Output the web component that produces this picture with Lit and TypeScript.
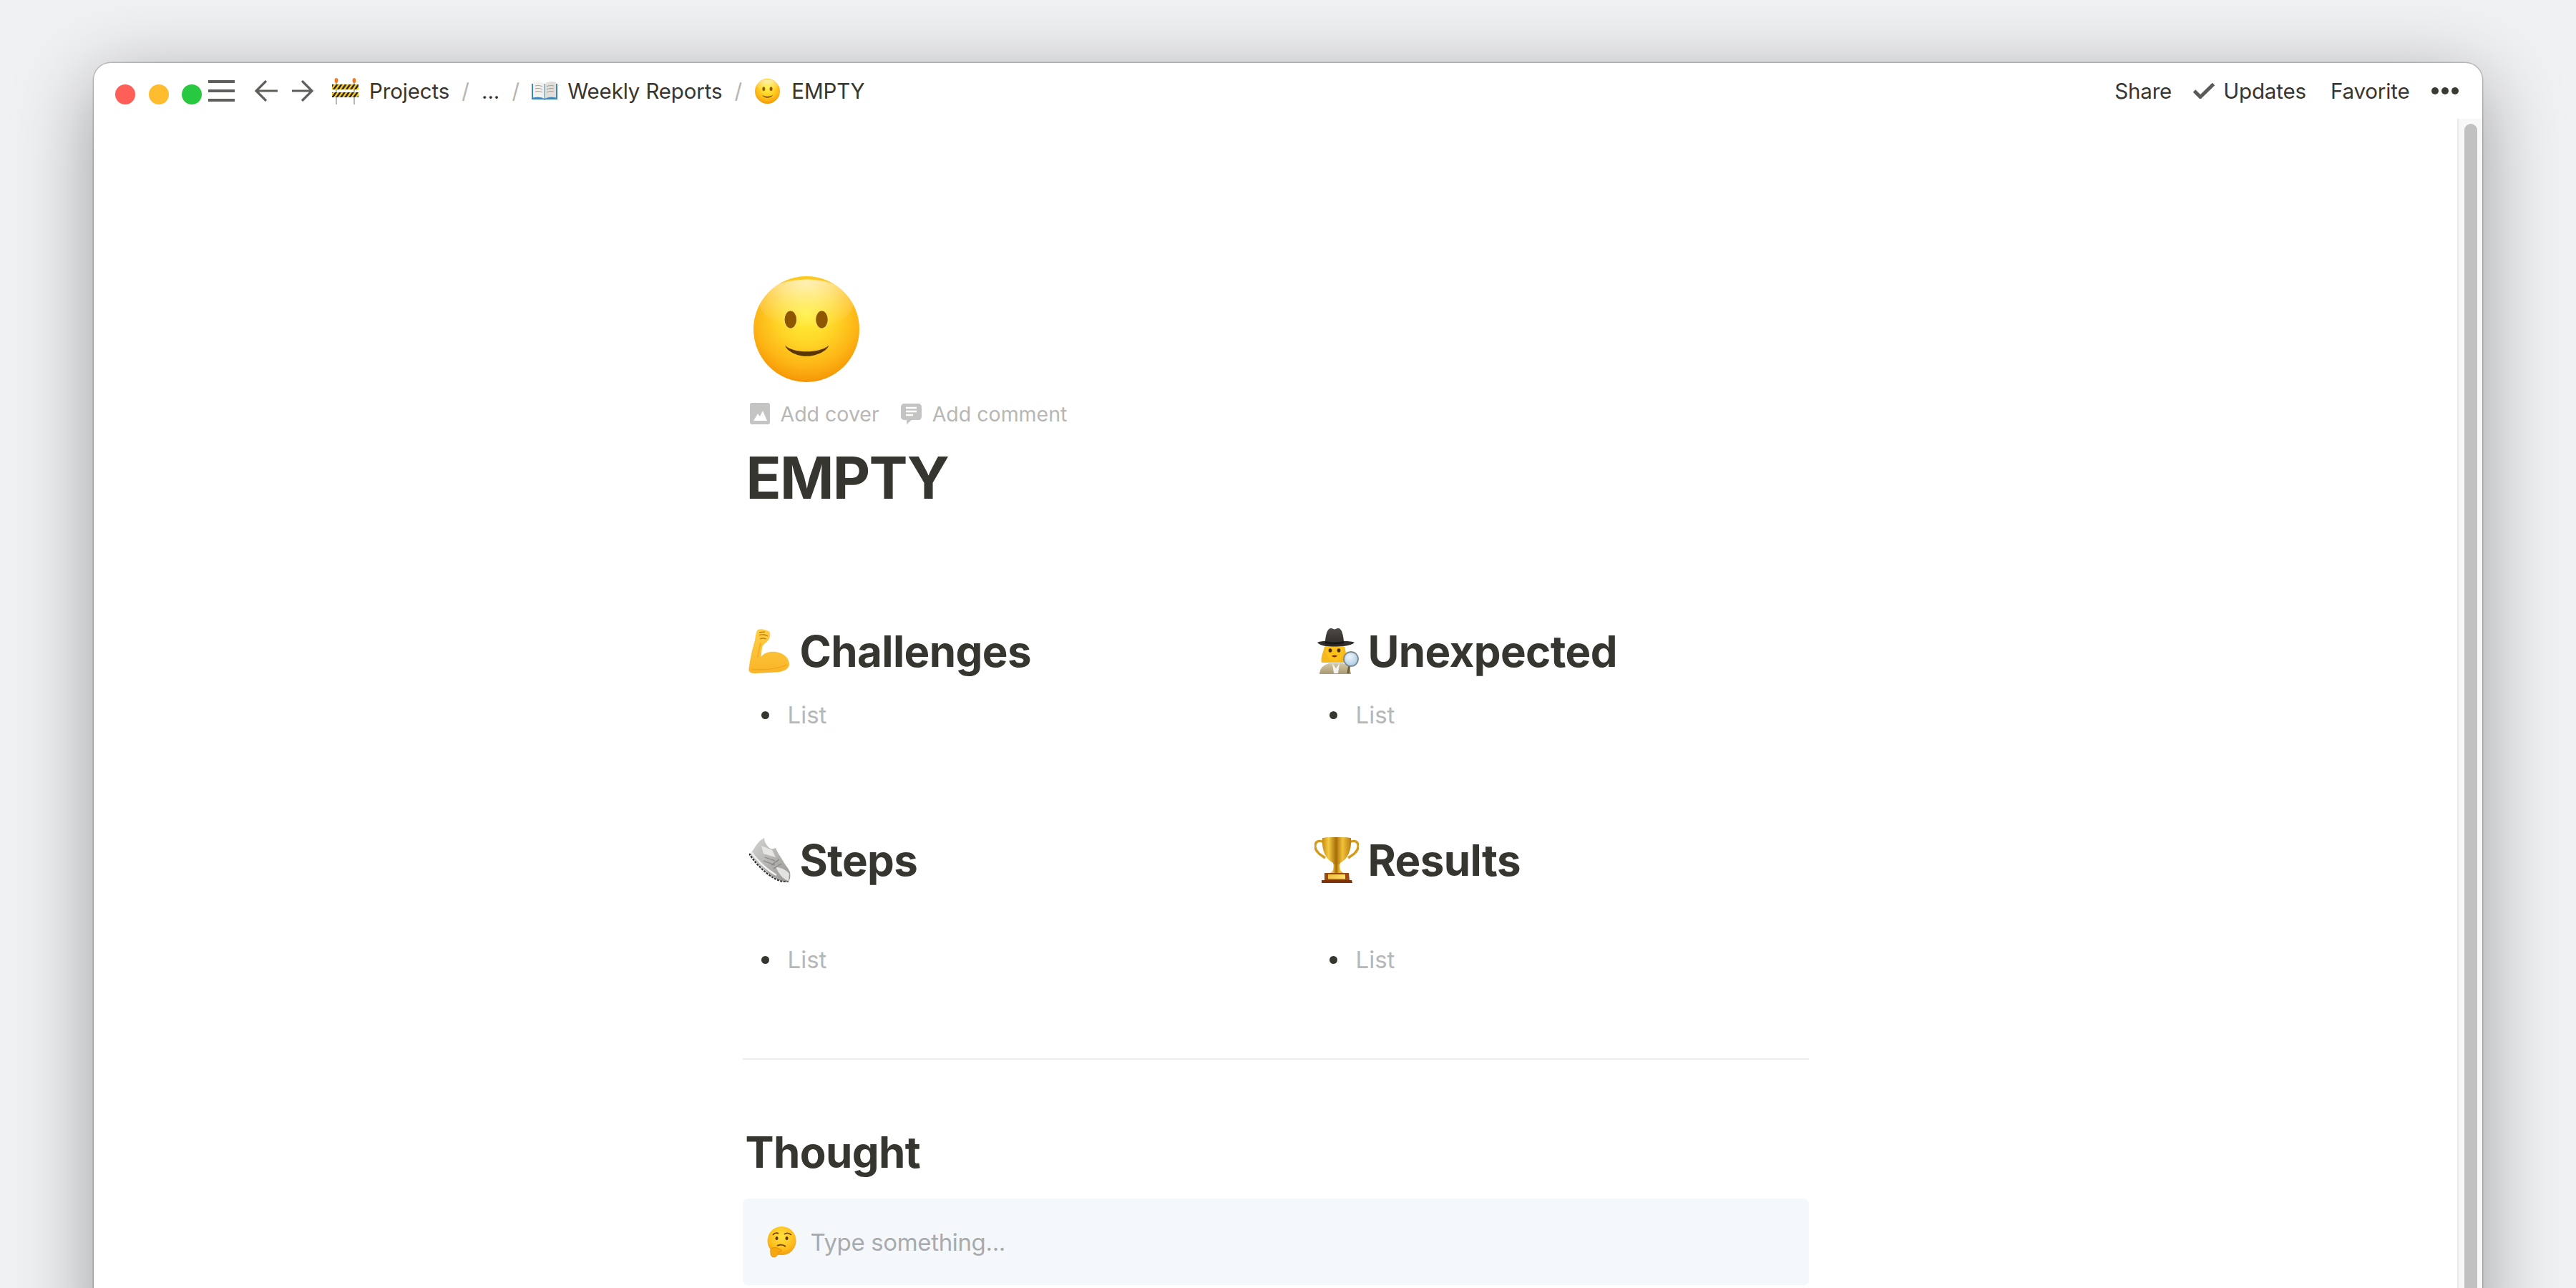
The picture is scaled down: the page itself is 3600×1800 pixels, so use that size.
import { LitElement, html, css } from "lit";
import { customElement } from "lit/decorators.js";

const smile = (size: number, cls = "") => html`<svg class=${cls} width=${size} height=${size} viewBox="0 0 100 100">
  <defs>
    <radialGradient id="sm" cx="50%" cy="36%" r="66%">
      <stop offset="0" stop-color="#fff03a"/><stop offset=".38" stop-color="#ffd92a"/>
      <stop offset=".75" stop-color="#fdb414"/><stop offset=".93" stop-color="#f79c08"/><stop offset="1" stop-color="#ec8800"/>
    </radialGradient>
    <radialGradient id="smh" cx="50%" cy="0%" r="100%">
      <stop offset="0" stop-color="#fff" stop-opacity=".7"/><stop offset=".55" stop-color="#fff" stop-opacity=".25"/><stop offset="1" stop-color="#fff" stop-opacity="0"/>
    </radialGradient>
  </defs>
  <circle cx="50" cy="50" r="50" fill="url(#sm)"/>
  <ellipse cx="50" cy="26" rx="44" ry="23" fill="url(#smh)"/>
  <ellipse cx="35" cy="41" rx="6" ry="8.600" fill="#8f5800" stroke="#ffe75a" stroke-width=".8"/>
  <ellipse cx="64.500" cy="41" rx="6" ry="8.600" fill="#8f5800" stroke="#ffe75a" stroke-width=".8"/>
  <path d="M30 65.500C38 73 62 73 71 65.500C70 70 60 75.500 50 75.500C40 75.500 31 70 30 65.500Z" fill="#5b3600"/>
</svg>`;

const biceps = html`<svg width="58" height="62" viewBox="0 0 58 62">
  <defs><linearGradient id="bi" x1="0" y1="0" x2="0" y2="1"><stop offset="0" stop-color="#ffcf45"/><stop offset="1" stop-color="#f9b428"/></linearGradient></defs>
  <path d="M13 1C17-1 26 1 29.500 4C31 8 30 13 27.500 16C24 20 20 22 19 26L17.500 39C22 33 30 31 38 32C49 33 57 41 57 49C57 56 49 60 38 60.500L8 62C3 62 0 60 .5 56C2 44 5 28 9 16C10 10 10 5 13 1Z" fill="url(#bi)"/>
  <path d="M15 9C18 7 24 8 27 10M16 14C19 12 22 13 25 14M15 5L23 4" stroke="#c57f10" stroke-width="1.300" fill="none"/>
  <path d="M17 19C16 26 13 34 13 40" stroke="#eea416" stroke-width="1.200" fill="none"/>
  <path d="M4 56C20 58 40 56 54 50" stroke="#eea416" stroke-width="1.200" fill="none"/>
</svg>`;

const detective = html`<svg width="58" height="64" viewBox="0 0 58 64">
  <defs>
    <linearGradient id="co" x1="0" y1="0" x2="0" y2="1"><stop offset="0" stop-color="#d4c8a4"/><stop offset="1" stop-color="#a89a74"/></linearGradient>
    <radialGradient id="gl" cx="40%" cy="35%" r="70%"><stop offset="0" stop-color="#eef6fb"/><stop offset="1" stop-color="#a9cbe3"/></radialGradient>
    <linearGradient id="ha" x1="0" y1="0" x2="0" y2="1"><stop offset="0" stop-color="#4e4a45"/><stop offset="1" stop-color="#2b2926"/></linearGradient>
  </defs>
  <path d="M6 48C4 42 8 34 10 26L38 26C40 34 42 42 40 48Z" fill="#f7b81f"/>
  <path d="M3 64C4 55 8 52 16 49L36 49C43 52 46 55 47 64Z" fill="url(#co)"/>
  <path d="M21 49L26 56L31 49L29 63L23 63Z" fill="#f2f2f0"/>
  <path d="M11 22L37 22C38 36 32 46 24 46C16 46 10 36 11 22Z" fill="#fcc21b"/>
  <ellipse cx="18" cy="31" rx="2.400" ry="2.800" fill="#4a2f08"/><ellipse cx="30" cy="31" rx="2.400" ry="2.800" fill="#4a2f08"/>
  <path d="M20 38.500C22 41 26 41 28 38.500C26 37.500 22 37.500 20 38.500Z" fill="#7a2f12"/>
  <path d="M0 20C4 18 10 18 11 18C12 6 15 0 19 0C21 0 23 1.500 24 1.500C25 1.500 27 0 29 0C34 0 36 8 37 18C40 18 48 18 52 20C46 25 32 25.500 24 25.500C14 25.500 5 25 0 20Z" fill="url(#ha)"/>
  <path d="M11 18C20 20 28 20 37 18L37.500 21C28 23 20 23 10.500 21Z" fill="#191816"/>
  <path d="M45 50L43 63" stroke="#6a5a3a" stroke-width="3"/>
  <circle cx="47" cy="43" r="10" fill="url(#gl)" stroke="#7e8b93" stroke-width="1.800"/>
</svg>`;

const shoe = html`<svg width="58" height="62" viewBox="0 0 58 62">
  <defs><linearGradient id="sh" x1="0" y1="0" x2="1" y2="1"><stop offset="0" stop-color="#d4d4d2"/><stop offset="1" stop-color="#989694"/></linearGradient></defs>
  <path d="M1 22C6 30 20 46 36 56C42 60 50 62 55 61C57 58 58 54 57 48C55 42 50 38 46 30C44 26 40 22 37 14C33 16 30 16 27 13C23 9 21 4 21 0C15 3 11 8 8 13C6 17 3 20 1 22Z" fill="url(#sh)"/>
  <path d="M17 11L32 17L37 27L20 22Z" fill="#e6e6e4"/>
  <path d="M37 40C42 42 49 42 56 50L55 60C48 58 42 52 37 40Z" fill="#e2e2e0"/>
  <path d="M22 27L36 32M20 32L36 38M31 38L42 30M34 43L45 36" stroke="#85837f" stroke-width="1.200" fill="none"/>
  <path d="M0 22C6 32 20 48 36 57C42 60 49 62 55 62" stroke="#2f2e2d" stroke-width="2.200" fill="none" stroke-dasharray="3 1.500"/>
  <path d="M3 20C9 29 22 43 38 52" stroke="#f0f0ee" stroke-width="2.500" fill="none"/>
</svg>`;

const trophy = html`<svg width="62" height="64" viewBox="0 0 62 64">
  <defs>
    <linearGradient id="tr" x1="0" y1="0" x2="1" y2="0"><stop offset="0" stop-color="#c88a10"/><stop offset=".22" stop-color="#f4cc44"/><stop offset=".48" stop-color="#a86d08"/><stop offset=".7" stop-color="#f2c23a"/><stop offset="1" stop-color="#b97d0c"/></linearGradient>
    <linearGradient id="tb" x1="0" y1="0" x2="1" y2="0"><stop offset="0" stop-color="#f0c040"/><stop offset="1" stop-color="#ffdf66"/></linearGradient>
  </defs>
  <path d="M13 7C5 3 0 7 1 14C2 21 9 25 15 29M49 7C57 3 62 7 61 14C60 21 53 25 47 29" fill="none" stroke="#d49a1c" stroke-width="3.400"/>
  <path d="M11 1C20-.5 42-.5 51 1C52 16 48 30 36 36L35 40L27 40L26 36C14 30 10 16 11 1Z" fill="url(#tr)"/>
  <path d="M27 38L35 38L36 46C38 49 41 50 42 52L20 52C21 50 24 49 26 46Z" fill="url(#tr)"/>
  <path d="M14 50L48 50L49 60L14 60Z" fill="#9c4a14"/>
  <rect x="19" y="52" width="24" height="6.500" fill="url(#tb)"/>
  <path d="M10 60L52 60L53 64L10 64Z" fill="#7e3208"/>
</svg>`;

const barrier = html`<svg width="38" height="37" viewBox="0 0 38 37">
  <defs><pattern id="st" width="6" height="8" patternUnits="userSpaceOnUse" patternTransform="skewX(-35)"><rect width="6" height="8" fill="#f6c51e"/><rect width="3" height="8" fill="#2a2a28"/></pattern></defs>
  <rect x="5" y="5" width="2" height="32" fill="#b9b9b7"/><rect x="30" y="5" width="2" height="32" fill="#b9b9b7"/>
  <ellipse cx="6" cy="3.500" rx="2.400" ry="3.500" fill="#f4781e"/><ellipse cx="31" cy="3.500" rx="2.400" ry="3.500" fill="#f4781e"/>
  <rect x="0" y="9" width="37" height="7" fill="url(#st)"/><rect x="0" y="20" width="37" height="7" fill="url(#st)"/>
</svg>`;

const book = html`<svg width="36" height="28" viewBox="0 0 36 28">
  <path d="M0 4L0 26L16 26C17 27 19 27 20 26L36 26L36 4Z" fill="#3f86b8"/>
  <path d="M2 2C8 0 14 1 17.500 4L17.500 25C14 22.500 8 22 2 23.500Z" fill="#f2f1ec"/>
  <path d="M34 2C28 0 22 1 18.500 4L18.500 25C22 22.500 28 22 34 23.500Z" fill="#dfded8"/>
  <path d="M5 7C9 6 12 6.500 15 8M5 11C9 10 12 10.500 15 12M5 15C9 14 12 14.500 15 16M21 8C24 6.500 27 6 31 7M21 12C24 10.500 27 10 31 11M21 16C24 14.500 27 14 31 15" stroke="#9e9d98" fill="none" stroke-width="1"/>
</svg>`;

const thinking = html`<svg width="43" height="43" viewBox="0 0 43 43">
  <defs><radialGradient id="th" cx="50%" cy="35%" r="66%"><stop offset="0" stop-color="#ffe23c"/><stop offset=".7" stop-color="#fdbc1c"/><stop offset="1" stop-color="#f39a0c"/></radialGradient></defs>
  <circle cx="21.500" cy="20" r="20" fill="url(#th)"/>
  <path d="M9 12C11 9 15 8.500 17 10M25 11C28 8.500 32 9 35 12" stroke="#6a3c06" stroke-width="1.600" fill="none"/>
  <ellipse cx="14.500" cy="16.500" rx="2" ry="2.600" fill="#5a3306"/><ellipse cx="28.500" cy="16.500" rx="2" ry="2.600" fill="#5a3306"/>
  <path d="M15 27C19 25 24 25.500 27 28" stroke="#6a3c06" stroke-width="1.800" fill="none"/>
  <path d="M7 31C10 28 16 30 20 32C23 34 20 36 17 35.500C18 38 15 42 11 43C8 43 6 41 6 38C6 35 5 33 7 31Z" fill="#f7a70e" stroke="#d98a05" stroke-width=".8"/>
</svg>`;

@customElement("app-root")
export class AppRoot extends LitElement {
  static styles = css`
    :host { display: block; height: 1800px; overflow: hidden; background: #f0f1f3; font-family: Inter, "Liberation Sans", sans-serif; color: #37352f; }
    .page { height: 1800px; box-sizing: border-box; padding: 88px 131px 0; overflow: hidden; }
    .window { height: 1800px; background: #fff; border-radius: 24px 24px 0 0; display: flex; flex-direction: column;
      box-shadow: 0 0 0 1.500px rgba(0,0,0,.18), 0 26px 110px rgba(0,0,0,.36); }
    .topbar { height: 78px; flex: none; display: flex; align-items: center; font-size: 29.500px; line-height: 40px; letter-spacing: -.15px; padding-left: 30px; padding-right: 33px; }
    .lights { display: flex; gap: 18.500px; margin-top: 10px; }
    .lights i { display: block; width: 28px; height: 28px; border-radius: 50%; }
    .r { background: #ff5f57; } .y { background: #febc2e; } .g { background: #28c840; }
    .crumbs { display: flex; align-items: center; margin-left: 9px; }
    .crumbs svg { display: block; flex: none; }
    .arrows { display: flex; gap: 20px; margin: 0 0 0 28px; }
    .path { margin-left: 26px; }
    .sep { color: #b4b4b2; width: 45px; text-align: center; }
    .emo { margin-right: 14px; }
    .emo.last { margin-left: 1px; margin-right: 16px; }
    .tail { margin-left: auto; display: flex; align-items: center; }
    .tail .check { margin: 0 12px 0 30px; }
    .tail .fav { margin-left: 34px; }
    .dots { display: flex; gap: 3.500px; margin-left: 30px; }
    .dots i { display: block; width: 10.500px; height: 10.500px; border-radius: 50%; background: #3c3a35; }
    .body { flex: 1; display: flex; min-height: 0; }
    .main { flex: 1; min-width: 0; }
    .track { width: 35px; flex: none; box-sizing: border-box; background: #f8f8f8; border-left: 3px solid #ececec; padding: 7px 7px 0 7px; }
    .thumb { height: 1800px; background: #c1c1c1; border-radius: 9px; }
    .doc { width: 1490px; margin: 0 auto; padding-top: 220px; }
    .pageicon { display: block; margin-left: 15px; }
    .add { display: flex; align-items: center; height: 40px; margin-top: 24px; padding-left: 10px; color: #b7b7b5; font-size: 28.500px; }
    .add svg { display: block; flex: none; margin-right: 15px; }
    .add span { margin-right: 30px; }
    h1 { margin: 20px 0 0; padding-left: 5px; font-size: 81px; line-height: 100px; font-weight: 700; letter-spacing: -1.700px; }
    .grid { display: grid; grid-template-columns: 696px 696px; column-gap: 98px; row-gap: 137px; margin-top: 153px; }
    .cell h2, .thought { margin: 0; font-size: 60px; line-height: 78px; font-weight: 700; letter-spacing: -.6px; }
    .cell h2 { display: flex; align-items: center; }
    .cell h2 svg { display: block; flex: none; }
    .c1 h2 { padding-left: 8px; } .c1 h2 svg { margin-right: 14px; }
    .c2 h2 { padding-left: 9px; } .c2 h2 svg { margin-right: 13px; }
    .c3 h2 { padding-left: 9px; } .c3 h2 svg { margin-right: 13px; }
    .c4 h2 { padding-left: 5px; } .c4 h2 svg { margin-right: 13px; }
    .item { display: flex; align-items: center; height: 54px; margin-top: 23px; padding-left: 26px; font-size: 33px; color: #b7b7b5; }
    .item.far { margin-top: 73px; }
    .item i { display: block; width: 11px; height: 11px; border-radius: 50%; background: #37352f; margin-right: 26px; }
    hr { border: 0; height: 2px; background: #ededec; margin: 111px 0 0; }
    .thought { margin-top: 90px; padding-left: 4px; }
    .callout { margin-top: 26px; height: 121px; box-sizing: border-box; padding-left: 33px; display: flex; align-items: center; gap: 19px; background: #f5f8fb; border-radius: 7px; font-size: 33px; letter-spacing: -.35px; color: #a8abad; }
    .callout svg { display: block; flex: none; }
  `;

  private cell(cls: string, icon: unknown, title: string, far = false) {
    return html`<div class="cell ${cls}"><h2>${icon}${title}</h2><div class="item ${far ? "far" : ""}"><i></i>List</div></div>`;
  }

  render() {
    return html`<div class="page"><div class="window">
      <header class="topbar">
        <div class="lights"><i class="r"></i><i class="y"></i><i class="g"></i></div>
        <div class="crumbs">
          <svg width="37" height="30" viewBox="0 0 37 30"><path d="M0 2H37M0 15H37M0 28H37" stroke="#5f5f5c" stroke-width="4"/></svg>
          <div class="arrows">
            <svg width="32" height="30" viewBox="0 0 32 30"><path d="M32 15H2M16 1L2 15L16 29" stroke="#5f5f5c" stroke-width="3.200" fill="none"/></svg>
            <svg width="30" height="30" viewBox="0 0 30 30"><path d="M0 15H28M14 1L28 15L14 29" stroke="#5f5f5c" stroke-width="3.200" fill="none"/></svg>
          </div>
        </div>
        <div class="crumbs path">
          <span class="emo">${barrier}</span><span>Projects</span>
          <span class="sep">/</span><span>...</span><span class="sep">/</span>
          <span class="emo">${book}</span><span>Weekly Reports</span>
          <span class="sep">/</span>
          <span class="emo last">${smile(35)}</span><span>EMPTY</span>
        </div>
        <div class="tail">
          <span>Share</span>
          <svg class="check" width="30" height="22" viewBox="0 0 30 22"><path d="M1.500 11L10 19.500L28.500 1.500" stroke="#5a5a57" stroke-width="5" fill="none"/></svg>
          <span>Updates</span>
          <span class="fav">Favorite</span>
          <div class="dots"><i></i><i></i><i></i></div>
        </div>
      </header>
      <div class="body">
        <main class="main"><div class="doc">
          ${smile(148, "pageicon")}
          <div class="add">
            <svg width="28" height="30" viewBox="0 0 28 30"><rect width="28" height="30" rx="3" fill="#c4c4c2"/><path d="M5 25L11 15L14 19L18 11L24 25Z" fill="#fff"/></svg>
            <span>Add cover</span>
            <svg width="29" height="29" viewBox="0 0 29 29"><path d="M5 0H24C27 0 29 2 29 5V18C29 21 27 23 24 23H15L8 29V23H5C2 23 0 21 0 18V5C0 2 2 0 5 0Z" fill="#c4c4c2"/><path d="M7 6H22M7 11H22M7 16H17" stroke="#fff" stroke-width="2.400"/></svg>
            <span>Add comment</span>
          </div>
          <h1>EMPTY</h1>
          <div class="grid">
            ${this.cell("c1", biceps, "Challenges")}
            ${this.cell("c2", detective, "Unexpected")}
            ${this.cell("c3", shoe, "Steps", true)}
            ${this.cell("c4", trophy, "Results", true)}
          </div>
          <hr />
          <div class="thought">Thought</div>
          <div class="callout">${thinking}<span>Type something...</span></div>
        </div></main>
        <div class="track"><div class="thumb"></div></div>
      </div>
    </div></div>`;
  }
}
